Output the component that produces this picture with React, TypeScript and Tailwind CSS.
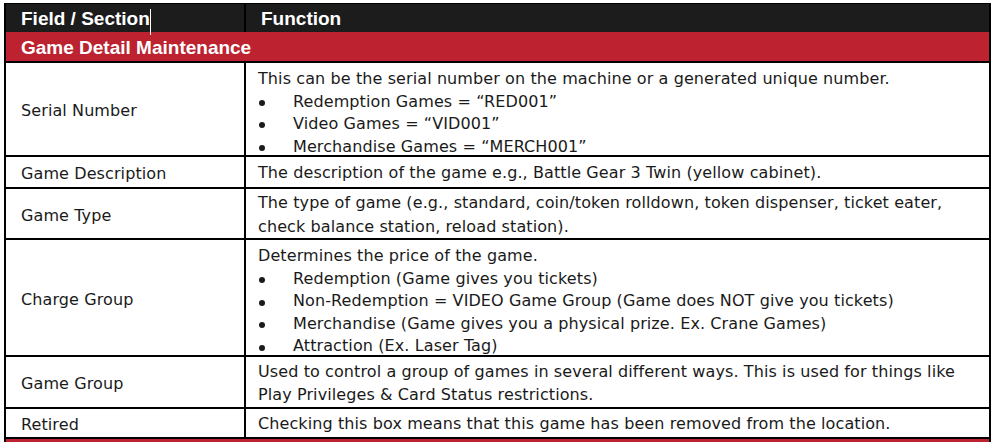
import React from 'react';

type Row = {
  field: string;
  height: string;
  pad: string;
  intro?: string[];
  bullets?: string[];
  leading: string;
};

// 表の行データ
const rows: Row[] = [
  {
    field: 'Serial Number',
    height: 'h-[92px]',
    pad: 'pt-[8px]',
    leading: 'leading-[22.5px]',
    intro: ['This can be the serial number on the machine or a generated unique number.'],
    bullets: [
      'Redemption Games = \u201cRED001\u201d',
      'Video Games = \u201cVID001\u201d',
      'Merchandise Games = \u201cMERCH001\u201d',
    ],
  },
  {
    field: 'Game Description',
    height: 'h-[30px]',
    pad: 'pt-[2px]',
    leading: 'leading-[22.5px]',
    intro: ['The description of the game e.g., Battle Gear 3 Twin (yellow cabinet).'],
  },
  {
    field: 'Game Type',
    height: 'h-[49px]',
    pad: 'pt-[2px]',
    leading: 'leading-[24px]',
    intro: [
      'The type of game (e.g., standard, coin/token rolldown, token dispenser, ticket eater,',
      'check balance station, reload station).',
    ],
  },
  {
    field: 'Charge Group',
    height: 'h-[115px]',
    pad: 'pt-[8px]',
    leading: 'leading-[22.5px]',
    intro: ['Determines the price of the game.'],
    bullets: [
      'Redemption (Game gives you tickets)',
      'Non-Redemption = VIDEO Game Group (Game does NOT give you tickets)',
      'Merchandise (Game gives you a physical prize. Ex. Crane Games)',
      'Attraction (Ex. Laser Tag)',
    ],
  },
  {
    field: 'Game Group',
    height: 'h-[50px]',
    pad: 'pt-[2px]',
    leading: 'leading-[23.5px]',
    intro: [
      'Used to control a group of games in several different ways. This is used for things like',
      'Play Privileges & Card Status restrictions.',
    ],
  },
  {
    field: 'Retired',
    height: 'h-[28px]',
    pad: 'pt-[2px]',
    leading: 'leading-[22.5px]',
    intro: ['Checking this box means that this game has been removed from the location.'],
  },
];

const bodyFont = "font-['DejaVu_Sans',sans-serif]";
const headFont = "font-['Liberation_Sans',Arial,sans-serif]";

export default function App() {
  return (
    <div className="w-[996px] h-[442px] overflow-hidden bg-white pl-[4px] pt-[3px]">
      <div className="w-[987px] border-x-2 border-t border-black">
        {/* ヘッダー */}
        <div className={`flex h-[28px] bg-[#1c1c1c] text-white text-[19px] font-bold ${headFont}`}>
          <div className="w-[240px] border-r-2 border-black pl-[15px] pt-[2px] flex items-center">
            <span>Field / Section</span>
            <span className="inline-block w-px h-[26px] bg-white translate-y-[3px]" />
          </div>
          <div className="flex-1 pl-[15px] pt-[2px] flex items-center">Function</div>
        </div>

        {/* セクション */}
        <div
          className={`h-[31px] bg-[#bc2230] border-b-2 border-black text-white text-[19px] font-bold pl-[15px] pt-[3px] flex items-center ${headFont}`}
        >
          Game Detail Maintenance
        </div>

        {/* 行 */}
        {rows.map((row) => (
          <div
            key={row.field}
            className={`flex ${row.height} box-content border-b-2 border-black text-[16px] tracking-[0.1px] text-[#1a1a1a] ${bodyFont}`}
          >
            <div className="w-[240px] border-r-2 border-black pl-[15px] pt-[4px] flex items-center whitespace-nowrap">
              {row.field}
            </div>
            <div className={`flex-1 pl-[12px] ${row.pad} flex flex-col justify-center whitespace-nowrap ${row.leading}`}>
              {row.intro?.map((line) => (
                <div key={line}>{line}</div>
              ))}
              {row.bullets?.map((b) => (
                <div key={b} className="flex items-center">
                  <span className="w-[35px] flex items-center">
                    <span className="ml-[1px] mt-[2px] w-[6px] h-[6px] rounded-full bg-[#1a1a1a]" />
                  </span>
                  <span>{b}</span>
                </div>
              ))}
            </div>
          </div>
        ))}

        <div className="h-[29px] bg-[#bc2230]" />
      </div>
    </div>
  );
}
